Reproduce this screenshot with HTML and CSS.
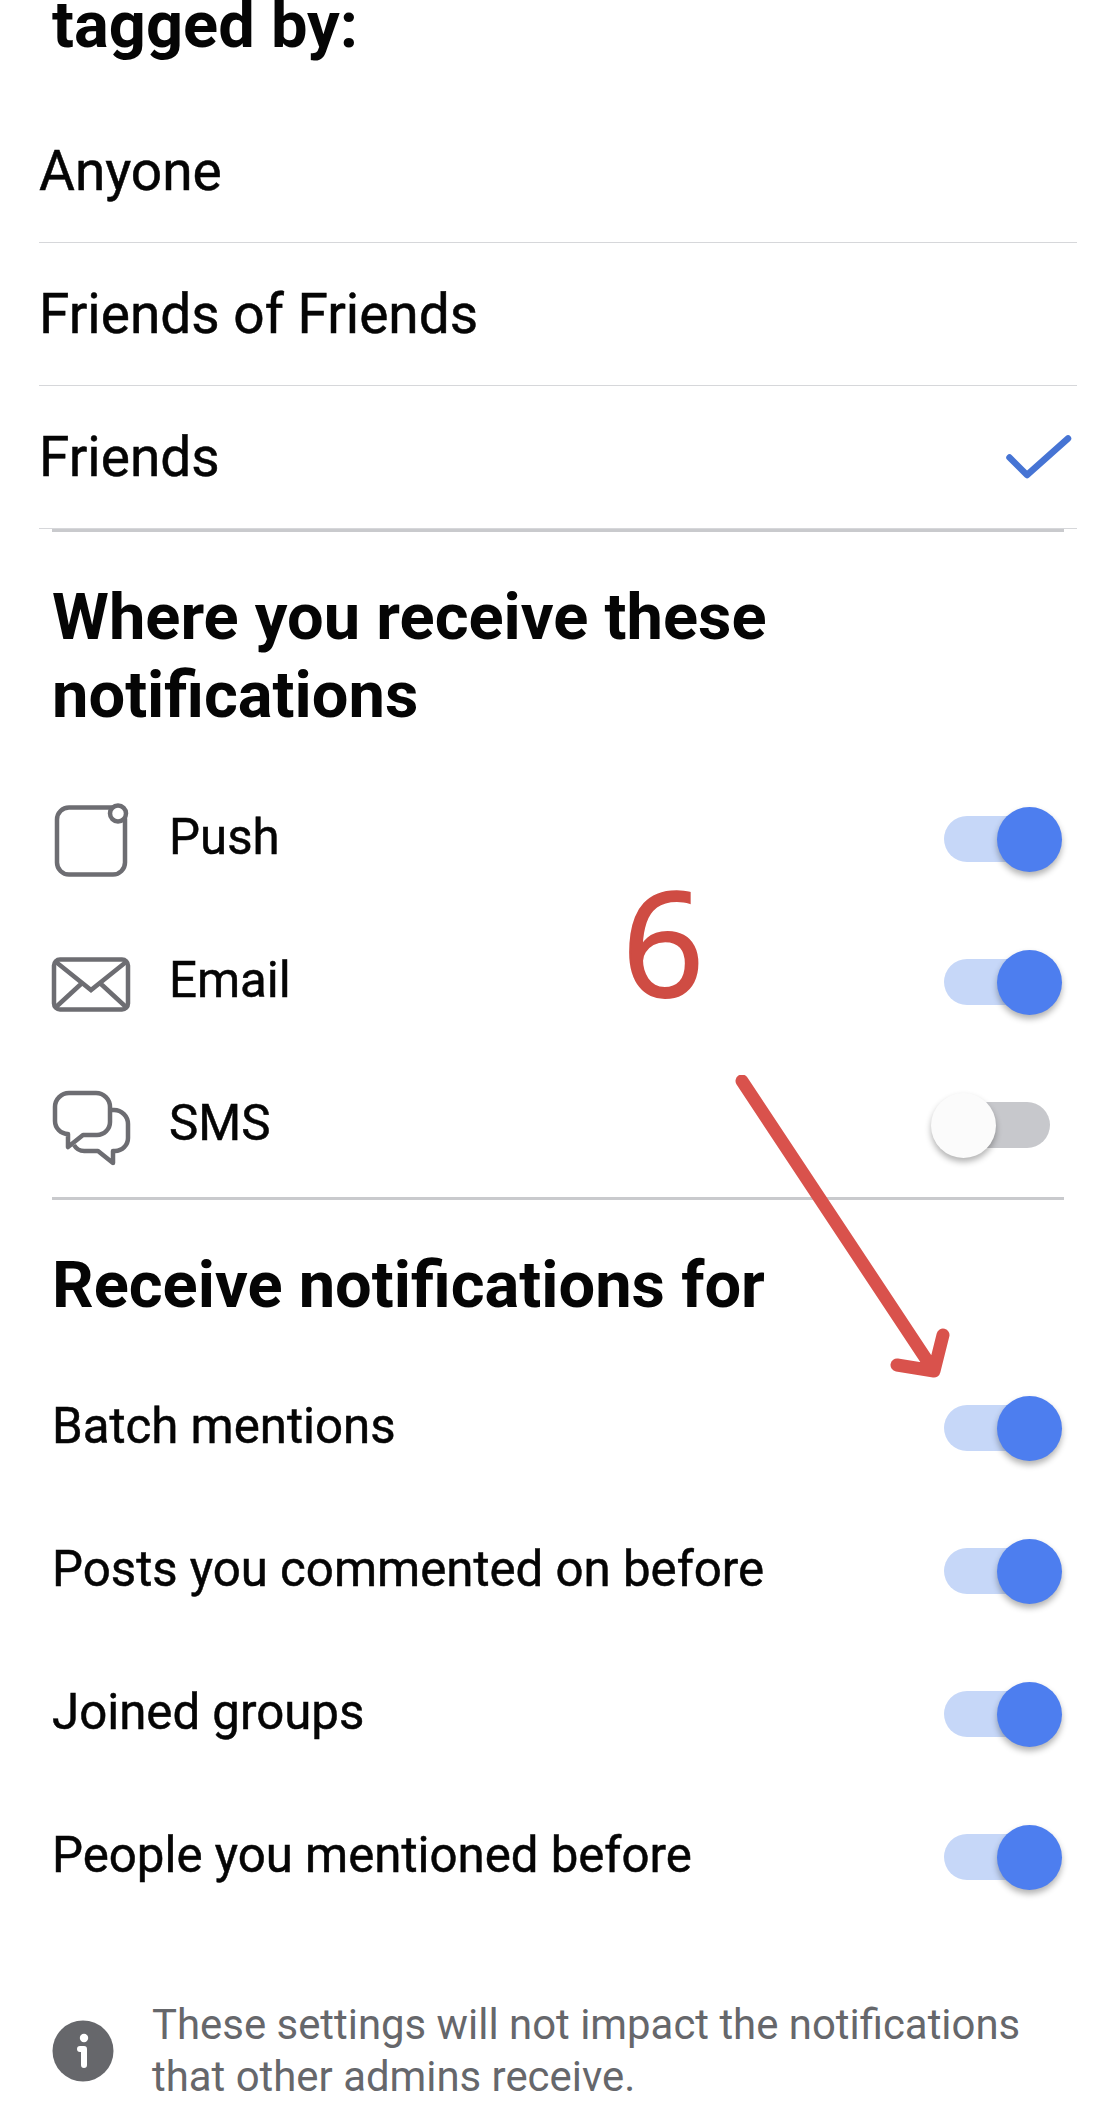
FILE: index.html
```html
<!DOCTYPE html>
<html lang="en">
<head>
  <meta charset="UTF-8">
  <meta name="viewport" content="width=device-width, initial-scale=1.0">
  <title>Notification settings</title>
  <link rel="stylesheet" href="styles.css">
</head>
<body>
  <div class="page">
    <section class="privacy">
      <h2 class="title">tagged by:</h2>
      <div class="options">
        <div class="option">Anyone</div>
        <div class="option">Friends of Friends</div>
        <div class="option">Friends
          <svg class="check" viewBox="0 0 67 46" width="67" height="46">
            <path d="M4.500 23.500 L22 41 L63 4.500" fill="none" stroke="#4674d4" stroke-width="6.500" stroke-linecap="round" stroke-linejoin="round"/>
          </svg>
        </div>
      </div>
    </section>

    <section class="group channels">
      <h2 class="title">Where you receive these notifications</h2>
      <div class="row">
        <svg class="row-icon" viewBox="0 0 80 88" width="80" height="88" fill="none" stroke="#6d6d72" stroke-width="4.500">
          <rect x="5" y="14.500" width="68" height="67" rx="12"/>
          <circle cx="66" cy="20.500" r="8" fill="#fff"/>
        </svg>
        <span class="label">Push</span>
        <div class="toggle on"><div class="knob"></div></div>
      </div>
      <div class="row">
        <svg class="row-icon" viewBox="0 0 80 88" width="80" height="88" fill="none" stroke="#6d6d72" stroke-width="4.500">
          <rect x="2" y="23.500" width="74" height="50" rx="6"/>
          <path d="M4 26 L39 54 L74 26 M4 71 L29 48 M74 71 L49 48"/>
        </svg>
        <span class="label">Email</span>
        <div class="toggle on"><div class="knob"></div></div>
      </div>
      <div class="row">
        <svg class="row-icon" viewBox="0 0 80 88" width="80" height="88" fill="none" stroke="#6d6d72" stroke-width="4.500" stroke-linejoin="round">
          <path d="M3 28a14 14 0 0 1 14-14H44a14 14 0 0 1 14 14V43a13 13 0 0 1-13 13H31L16 68V55A13 13 0 0 1 3 42Z"/>
          <path d="M58 31H62a14 14 0 0 1 14 14V59a13 13 0 0 1-13 13H61V84L46 72H33a12 12 0 0 1-11-6"/>
        </svg>
        <span class="label">SMS</span>
        <div class="toggle off"><div class="knob"></div></div>
      </div>
    </section>

    <section class="group topics">
      <h2 class="title">Receive notifications for</h2>
      <div class="row"><span class="label">Batch mentions</span><div class="toggle on"><div class="knob"></div></div></div>
      <div class="row"><span class="label">Posts you commented on before</span><div class="toggle on"><div class="knob"></div></div></div>
      <div class="row"><span class="label">Joined groups</span><div class="toggle on"><div class="knob"></div></div></div>
      <div class="row"><span class="label">People you mentioned before</span><div class="toggle on"><div class="knob"></div></div></div>
    </section>

    <div class="note">
      <svg class="note-icon" viewBox="0 0 62 62" width="62" height="62">
        <circle cx="31" cy="31" r="30.500" fill="#66676b"/>
        <circle cx="32" cy="18" r="4.200" fill="#fff"/>
        <path d="M28 29H32V45" fill="none" stroke="#fff" stroke-width="6" stroke-linecap="round" stroke-linejoin="round"/>
      </svg>
      <p class="note-text">These settings will not impact the notifications that other admins receive.</p>
    </div>

    <!-- red markup drawn on top of the screenshot -->
    <span class="mark-number">6</span>
    <svg class="mark-arrow" viewBox="0 0 240 320" width="240" height="320" fill="none" stroke="#d9524c" stroke-width="13" stroke-linecap="round" stroke-linejoin="round">
      <path d="M9 6 L201 296 M164 290 L201 296 L210 260"/>
    </svg>
  </div>
</body>
</html>
```

FILE: styles.css
```css
* {
  box-sizing: border-box;
}

html, body {
  margin: 0;
  height: 2114px;
  overflow: hidden;
  background: #fff;
}

body {
  font-family: Roboto, "Liberation Sans", sans-serif;
  color: #050505;
}

.page {
  position: relative;
  height: 2128px;
  margin-top: -14px;
}

.title {
  margin: 0;
  font-size: 65px;
  font-weight: 700;
  line-height: 78px;
}

.privacy .title {
  padding-left: 52px;
  margin-bottom: 36px;
}

.options {
  padding: 0 39px 0 39px;
}

.option {
  display: flex;
  align-items: center;
  justify-content: space-between;
  height: 143px;
  border-bottom: 1px solid #d6d7da;
  font-size: 55px;
  -webkit-text-stroke: 0.5px #050505;
}

.check {
  margin-right: 5px;
}

.group {
  margin: 0 52px;
  border-top: 3px solid #c9cacd;
}

.channels {
  padding: 46px 0 0;
}

.channels .row:first-of-type {
  margin-top: 31px;
}

.topics {
  margin-top: 3px;
  padding-top: 46px;
}

.topics .title {
  margin-bottom: 30px;
}

.row {
  display: flex;
  align-items: center;
  height: 143px;
  padding-right: 14px;
}

.row-icon {
  flex: none;
  margin-right: 37px;
  overflow: visible;
}

.label {
  flex: 1;
  font-size: 49.200px;
  -webkit-text-stroke: 0.5px #050505;
}

.toggle {
  display: flex;
  align-items: center;
  flex: none;
  width: 106px;
  height: 46px;
  border-radius: 23px;
  margin-top: 5px;
}

.toggle.on {
  justify-content: flex-end;
  background: #c6d7f8;
}

.toggle.off {
  background: #c7c8cc;
}

.knob {
  flex: none;
  width: 65px;
  height: 65px;
  border-radius: 50%;
  box-shadow: 0 4px 6px rgba(0, 0, 0, 0.3);
}

.on .knob {
  margin-right: -12px;
  background: #4d7eef;
}

.off .knob {
  margin-left: -13px;
  background: #fbfbfb;
}

.note {
  display: flex;
  align-items: center;
  margin-top: 73px;
  padding: 0 52px;
  gap: 38px;
}

.note-icon {
  flex: none;
}

.note-text {
  margin: 0;
  font-size: 41.900px;
  line-height: 52px;
  color: #66676b;
}

.mark-number {
  position: absolute;
  left: 622px;
  top: 865px;
  font-family: "Open Sans", sans-serif;
  font-size: 144px;
  line-height: 180px;
  -webkit-text-stroke: 2px #cf4c43;
  color: #cf4c43;
}

.mark-arrow {
  position: absolute;
  left: 733px;
  top: 1089px;
}
```
